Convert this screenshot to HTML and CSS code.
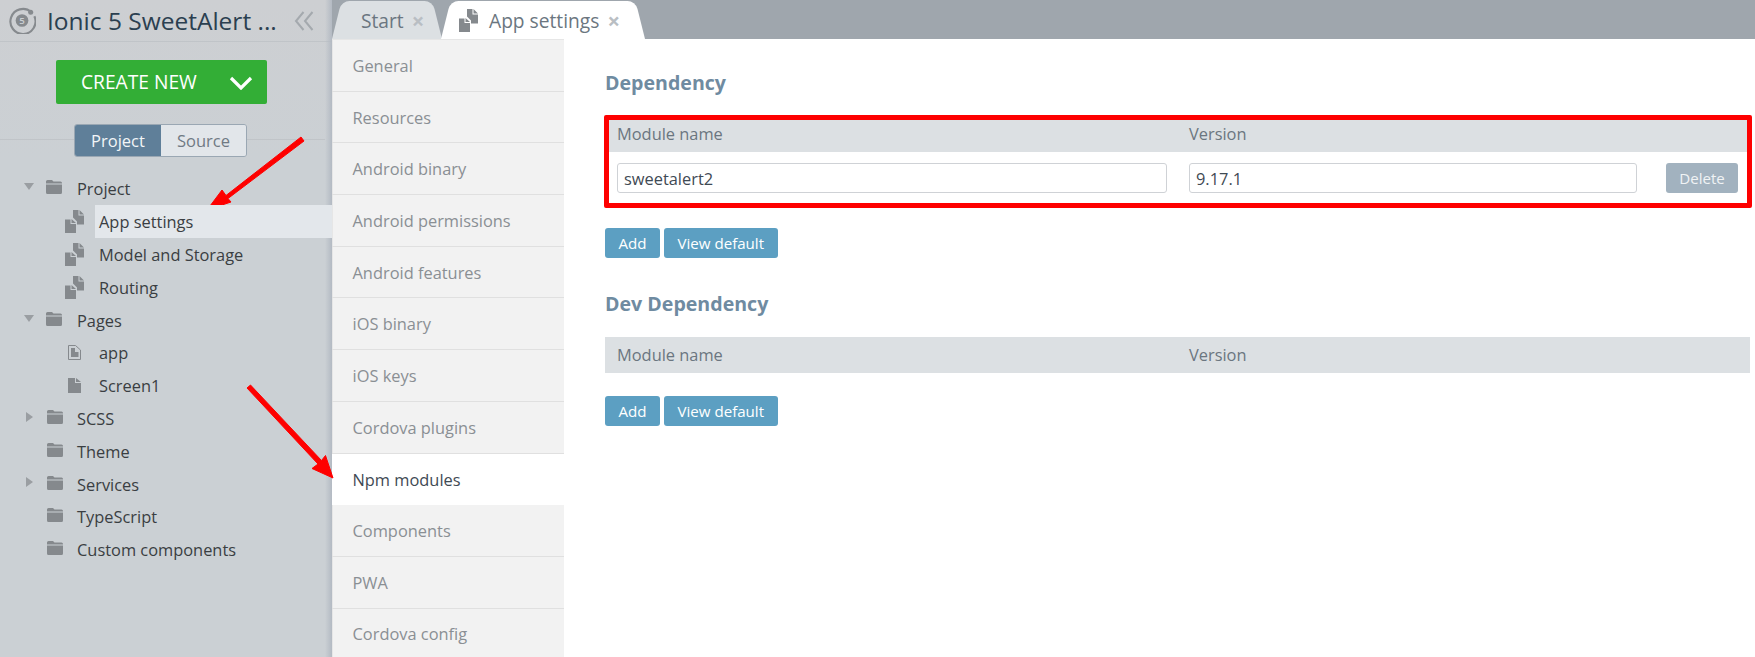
FILE: index.html
```html
<!DOCTYPE html>
<html lang="en">
<head>
<meta charset="utf-8">
<title>App settings</title>
<link rel="stylesheet" href="styles.css">
</head>
<body>
<svg class="defs" width="0" height="0" aria-hidden="true">
  <defs>
    <symbol id="i-folder" viewBox="0 0 16 15"><path d="M0 2.500Q0 1 1.500 1H6L7.500 2.500H14.500Q16 2.500 16 4V4.500H0ZM0 5.500H16V13.500Q16 15 14.500 15H1.500Q0 15 0 13.500Z"/></symbol>
    <symbol id="i-multi" viewBox="0 0 19 23"><path d="M0 9.500H5.500V14H11V23H0ZM6.500 9L11 13H6.500ZM8 0H13.500V5.500H19V14.500H12V11.500L8 7.500ZM14.500 0L19 4.500H14.500Z"/></symbol>
    <symbol id="i-page" viewBox="0 0 13 15"><path d="M0 0H7V5H13V15H0ZM8 0L13 4H8Z"/></symbol>
  </defs>
</svg>
<div class="app">
  <aside class="sidebar">
    <header class="side-head">
      <svg class="logo" viewBox="0 0 28 28"><path d="M23 5.200A13 13 0 1 0 26.300 9.600" fill="none" stroke="#868a8e" stroke-width="2.200"/><circle cx="22.500" cy="5.500" r="2.600" fill="#868a8e"/><circle cx="13.500" cy="14" r="6.600" fill="#868a8e"/><text x="13.500" y="17.600" class="logo-num">5</text></svg>
      <span class="title">Ionic 5 SweetAlert ...</span>
      <svg class="collapse" viewBox="0 0 20 20"><path d="M9.500 1L2 10L9.500 19M18.500 1L11 10L18.500 19" fill="none" stroke="#a4a9ae" stroke-width="2"/></svg>
    </header>
    <div class="create-wrap">
      <button class="create"><span class="create-text">CREATE NEW</span>
        <svg class="create-chev" viewBox="0 0 24 14"><path d="M2 2L12 12L22 2" fill="none" stroke="#fff" stroke-width="3.200"/></svg>
      </button>
    </div>
    <div class="switch-wrap">
      <div class="switch">
        <span class="sw sw-on">Project</span><span class="sw sw-off">Source</span>
      </div>
    </div>
    <ul class="tree">
      <li class="row folder"><i class="tri down"></i><svg class="ic-folder"><use href="#i-folder"/></svg><span>Project</span></li>
      <li class="row child selected"><svg class="ic-multi"><use href="#i-multi"/></svg><span class="sel-label">App settings</span></li>
      <li class="row child"><svg class="ic-multi"><use href="#i-multi"/></svg><span class="sel-label">Model and Storage</span></li>
      <li class="row child"><svg class="ic-multi"><use href="#i-multi"/></svg><span class="sel-label">Routing</span></li>
      <li class="row folder"><i class="tri down"></i><svg class="ic-folder"><use href="#i-folder"/></svg><span>Pages</span></li>
      <li class="row child"><svg class="ic-page" viewBox="0 0 13 15"><path d="M.500.500H7.500L12.500 5V14.500H.500Z" fill="none" stroke="#85898d"/><path d="M3 3H7V7H10.500V12H3Z" fill="#85898d"/></svg><span class="sel-label">app</span></li>
      <li class="row child"><svg class="ic-page"><use href="#i-page"/></svg><span class="sel-label">Screen1</span></li>
      <li class="row folder"><i class="tri right"></i><svg class="ic-folder"><use href="#i-folder"/></svg><span>SCSS</span></li>
      <li class="row folder"><i class="tri none"></i><svg class="ic-folder"><use href="#i-folder"/></svg><span>Theme</span></li>
      <li class="row folder"><i class="tri right"></i><svg class="ic-folder"><use href="#i-folder"/></svg><span>Services</span></li>
      <li class="row folder"><i class="tri none"></i><svg class="ic-folder"><use href="#i-folder"/></svg><span>TypeScript</span></li>
      <li class="row folder"><i class="tri none"></i><svg class="ic-folder"><use href="#i-folder"/></svg><span>Custom components</span></li>
    </ul>
  </aside>
  <section class="main">
    <div class="tabs">
      <div class="tab tab-start"><span>Start</span><b class="x">×</b></div>
      <div class="tab tab-active"><svg class="ic-multi tab-ic"><use href="#i-multi"/></svg><span>App settings</span><b class="x">×</b></div>
    </div>
    <div class="body">
      <nav class="nav">
        <a>General</a><a>Resources</a><a>Android binary</a><a>Android permissions</a><a>Android features</a><a>iOS binary</a><a>iOS keys</a><a>Cordova plugins</a><a class="on">Npm modules</a><a>Components</a><a>PWA</a><a>Cordova config</a>
      </nav>
      <main class="content">
        <h2 class="h-first">Dependency</h2>
        <div class="thead"><span class="c1">Module name</span><span>Version</span></div>
        <div class="trow">
          <input class="inp i1" value="sweetalert2">
          <input class="inp i2" value="9.17.1">
          <button class="btn del">Delete</button>
        </div>
        <div class="actions"><button class="btn">Add</button><button class="btn">View default</button></div>
        <h2 class="h-second">Dev Dependency</h2>
        <div class="thead"><span class="c1">Module name</span><span>Version</span></div>
        <div class="actions actions-dev"><button class="btn">Add</button><button class="btn">View default</button></div>
      </main>
    </div>
  </section>
</div>
<div class="redbox"></div>
<svg class="arrows" viewBox="0 0 1755 657">
  <path d="M301 137L226 195.500L222 190L207 210L231 202L228 198.500L304 141Z" fill="#fe0000" stroke="#fe0000" stroke-linejoin="round"/>
  <path d="M247 388L318 464L312 468.500L333 478L325.500 455.500L321.500 460.500L250.500 385Z" fill="#fe0000" stroke="#fe0000" stroke-linejoin="round"/>
</svg>
</body>
</html>
```
FILE: styles.css
```css
* { box-sizing: border-box; }
html, body { margin: 0; height: 657px; overflow: hidden; }
body { font-family: "Open Sans", sans-serif; font-size: 16.400px; color: #3c4650; background: #fff; position: relative; }
.defs { position: absolute; }
.app { display: flex; height: 657px; }

.sidebar { width: 332px; flex: none; background: linear-gradient(to bottom, #cdcfd2, #cbd0d4 160px); position: relative; }
.sidebar::after { content: ""; position: absolute; top: 0; bottom: 0; right: 0; width: 7px; background: linear-gradient(to right, rgba(179, 186, 195, 0), #b3bac3); }
.side-head { height: 42px; display: flex; align-items: center; border-bottom: 1px solid #c0c4c8; padding-left: 9px; }
.logo { width: 27px; height: 27px; flex: none; }
.logo-num { font-size: 10px; font-weight: 600; fill: #cbd0d4; text-anchor: middle; font-family: "Open Sans", sans-serif; }
.title { font-size: 24.500px; margin-left: 11px; color: #2b3f50; white-space: nowrap; width: 248px; }
.collapse { width: 20px; height: 20px; flex: none; margin-left: -1px; }
.create-wrap { padding: 18px 0 0 56px; }
.create { width: 211px; height: 44px; background: #33ae36; border: 0; border-radius: 2px; color: #fff; font: 19.200px "Open Sans", sans-serif; display: flex; align-items: center; padding: 0 0 0 25px; }
.create-text { margin-top: -2px; }
.create-chev { width: 24px; height: 14px; margin-left: 32px; margin-top: 2px; }
.switch-wrap { margin-top: 20px; height: 33px; padding-left: 74px; position: relative; }
.switch-wrap::before { content: ""; position: absolute; left: 0; right: 7px; top: 15px; border-top: 1px solid #c0c4c8; }
.switch { display: flex; width: 173px; height: 33px; position: relative; border: 1px solid #9aa7b3; border-radius: 3px; overflow: hidden; font-size: 16.500px; }
.sw { display: flex; align-items: center; justify-content: center; }
.sw-on { width: 86px; background: #5f7f99; color: #f2f5f7; }
.sw-off { flex: 1; background: #e2e6ea; color: #707a84; }
.tree { list-style: none; margin: 15.600px 0 0; padding: 0; }
.row { height: 32.800px; display: flex; align-items: center; color: #3a3e42; font-size: 16.400px; white-space: nowrap; }
.tri { width: 0; height: 0; display: block; flex: none; margin-top: -4px; }
.tri.down { margin-left: 24px; margin-right: 12px; border-left: 5.500px solid transparent; border-right: 5.500px solid transparent; border-top: 7px solid #9a9ea2; }
.tri.right { margin-left: 26px; margin-right: 14px; border-top: 5.500px solid transparent; border-bottom: 5.500px solid transparent; border-left: 7px solid #9a9ea2; }
.tri.none { margin-left: 47px; }
.ic-folder { width: 16px; height: 15px; fill: #85898d; flex: none; margin-right: 14px; margin-top: -4px; }
.tri.down + .ic-folder { margin-right: 15px; }
.child { padding-left: 65px; }
.ic-multi { width: 19px; height: 23px; fill: #85898d; flex: none; }
.child .ic-multi { margin-right: 11px; }
.ic-page { width: 13px; height: 15px; fill: #85898d; flex: none; margin: 0 11px 0 3px; }
.child .ic-page + .sel-label { margin-left: 3px; }
.sel-label { padding-left: 4px; }
.selected .sel-label { background: #e3e7eb; height: 33px; flex: 1; display: flex; align-items: center; position: relative; z-index: 1; }

.main { flex: 1; min-width: 0; display: flex; flex-direction: column; }
.tabs { height: 39px; background: #9fa6ad; display: flex; flex: none; align-items: flex-end; }
.tab { height: 38px; position: relative; display: flex; align-items: center; z-index: 0; font-size: 19.200px; }
.tab::before, .tab::after { content: ""; position: absolute; top: 0; bottom: 0; width: 60%; z-index: -1; }
.tab::before { left: 0; transform-origin: bottom left; transform: skewX(-14deg); border-radius: 8px 0 0 0; }
.tab::after { right: 0; transform-origin: bottom right; transform: skewX(14deg); border-radius: 0 8px 0 0; }
.tab-start { width: 110px; padding-left: 29px; color: #6b7680; }
.tab-start::before, .tab-start::after { background: #dce0e3; }
.tab-active { width: 204px; margin-left: -1px; padding-left: 18px; color: #6b7680; }
.tab-active::before, .tab-active::after { background: #fff; }
.tab-ic { margin-right: 11px; }
.x { font-weight: 700; font-size: 22px; color: #b9bec3; margin-left: 8px; line-height: 1; }
.body { flex: 1; display: flex; min-height: 0; }
.nav { width: 232px; flex: none; background: #f2f2f2; display: flex; flex-direction: column; padding-top: 1px; box-shadow: inset 1px 1px 0 #e6e6e6; }
.nav a { height: 51.700px; flex: none; display: flex; align-items: center; padding-left: 20.500px; color: #8a8f94; border-bottom: 1px solid #e0e0e0; font-size: 16.400px; }
.nav a.on { background: #fff; color: #3f4a54; border-bottom: 0; }
.content { flex: 1; min-width: 0; padding: 26px 5px 0 41px; }
h2 { font-size: 19.600px; font-weight: 700; color: #6f8ba1; margin: 0; line-height: 36px; height: 36px; }
.h-first { margin-bottom: 15px; }
.h-second { margin-top: 28px; margin-bottom: 15px; }
.thead { height: 36px; background: #dce0e3; display: flex; align-items: center; color: #6b7680; font-size: 16.400px; padding: 0 0 2px 12px; }
.c1 { width: 572px; }
.trow { height: 52px; display: flex; align-items: center; padding: 0 12px; }
.inp { height: 30px; border: 1px solid #cfd2d6; border-radius: 3px; font: 16.400px "Open Sans", sans-serif; color: #3f4a54; padding: 0 6px; background: #fff; }
.i1 { width: 550px; margin-right: 22px; }
.i2 { width: 448px; margin-right: 29px; }
.btn { height: 30px; background: #5c9fc2; border: 0; border-radius: 3px; color: #fff; font: 15.100px "Open Sans", sans-serif; padding: 0 13.500px; }
.del { background: #a2b2bf; width: 72px; padding: 0; color: #f0f3f5; }
.actions { display: flex; gap: 4px; margin-top: 24px; }
.actions-dev { margin-top: 23px; }

.redbox { position: absolute; left: 604px; top: 115px; width: 1148px; height: 93px; border: 5px solid #fe0000; border-radius: 2px; }
.arrows { position: absolute; left: 0; top: 0; width: 1755px; height: 657px; pointer-events: none; }
```
